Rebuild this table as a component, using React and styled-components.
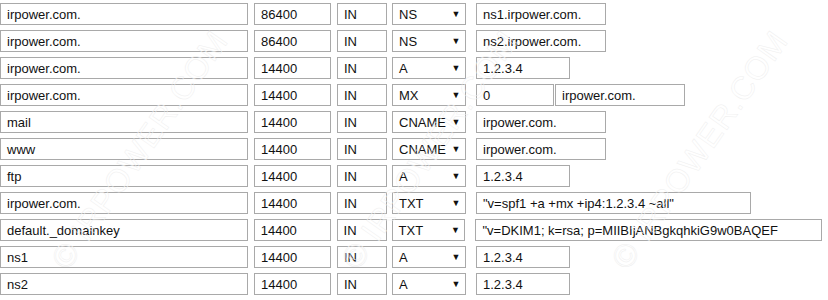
import React from 'react';
import styled, { createGlobalStyle } from 'styled-components';

const GlobalStyle = createGlobalStyle`
  html, body {
    margin: 0;
    padding: 0;
    background: #ffffff;
  }
  body {
    font-family: "Liberation Sans", Arial, sans-serif;
  }
`;

const Page = styled.div`
  position: relative;
  width: 828px;
  height: 300px;
  overflow: hidden;
  padding: 3px 0 0 0;
  box-sizing: border-box;
`;

const Row = styled.div`
  display: flex;
  align-items: center;
  height: 22px;
  margin-bottom: 5px;
`;

const Field = styled.div`
  box-sizing: border-box;
  width: ${p => p.w}px;
  height: 22px;
  margin-right: ${p => (p.gap === undefined ? 6 : p.gap)}px;
  border: 1px solid #a9a9a9;
  background: #fff;
  padding: 0 6px;
  display: flex;
  align-items: center;
  font-size: 13px;
  color: #111;
  white-space: nowrap;
  overflow: hidden;
`;

const Select = styled.div`
  box-sizing: border-box;
  width: 74px;
  height: 22px;
  margin-right: 10px;
  border: 1px solid #a9a9a9;
  background: #fff;
  padding: 0 0 0 6px;
  display: flex;
  align-items: center;
  justify-content: space-between;
  font-size: 13px;
  color: #111;
`;

const Arrow = styled.span`
  font-size: 9px;
  width: 18px;
  text-align: center;
  color: #111;
`;

// faint diagonal watermark drawn over the form
const Watermark = styled.div`
  position: absolute;
  left: ${p => p.x}px;
  top: ${p => p.y}px;
  transform: translate(-50%, -50%) rotate(-55deg);
  font-family: "Liberation Sans", Arial, sans-serif;
  font-size: 32px;
  letter-spacing: 1px;
  white-space: nowrap;
  color: transparent;
  -webkit-text-stroke: 0.5px #efefef;
  pointer-events: none;
`;

const records = [
  { name: 'irpower.com.', ttl: '86400', type: 'NS', values: [{ v: 'ns1.irpower.com.', w: 130 }] },
  { name: 'irpower.com.', ttl: '86400', type: 'NS', values: [{ v: 'ns2.irpower.com.', w: 130 }] },
  { name: 'irpower.com.', ttl: '14400', type: 'A', values: [{ v: '1.2.3.4', w: 94 }] },
  { name: 'irpower.com.', ttl: '14400', type: 'MX', values: [{ v: '0', w: 78, gap: 1 }, { v: 'irpower.com.', w: 130 }] },
  { name: 'mail', ttl: '14400', type: 'CNAME', values: [{ v: 'irpower.com.', w: 130 }] },
  { name: 'www', ttl: '14400', type: 'CNAME', values: [{ v: 'irpower.com.', w: 130 }] },
  { name: 'ftp', ttl: '14400', type: 'A', values: [{ v: '1.2.3.4', w: 94 }] },
  { name: 'irpower.com.', ttl: '14400', type: 'TXT', values: [{ v: '"v=spf1 +a +mx +ip4:1.2.3.4 ~all"', w: 275 }] },
  { name: 'default._domainkey', ttl: '14400', type: 'TXT', values: [{ v: '"v=DKIM1; k=rsa; p=MIIBIjANBgkqhkiG9w0BAQEF', w: 347 }] },
  { name: 'ns1', ttl: '14400', type: 'A', values: [{ v: '1.2.3.4', w: 94 }] },
  { name: 'ns2', ttl: '14400', type: 'A', values: [{ v: '1.2.3.4', w: 94 }] },
];

const marks = [
  { x: 140, y: 150 },
  { x: 430, y: 150 },
  { x: 700, y: 150 },
];

export default function App() {
  return (
    <>
      <GlobalStyle />
      <Page>
        {records.map((r, i) => (
          <Row key={i}>
            <Field w={248}>{r.name}</Field>
            <Field w={77}>{r.ttl}</Field>
            <Field w={50} gap={5}>IN</Field>
            <Select>
              <span>{r.type}</span>
              <Arrow>▼</Arrow>
            </Select>
            {r.values.map((val, j) => (
              <Field key={j} w={val.w} gap={val.gap}>{val.v}</Field>
            ))}
          </Row>
        ))}
        {marks.map((m, i) => (
          <Watermark key={i} x={m.x} y={m.y}>© IRPOWER.COM</Watermark>
        ))}
      </Page>
    </>
  );
}
